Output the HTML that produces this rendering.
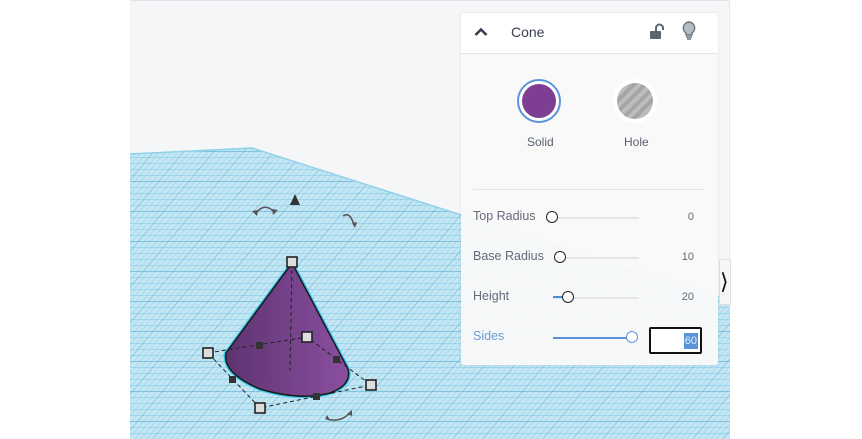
<!DOCTYPE html>
<html><head><style>
body{margin:0;width:862px;height:438px;background:#fff;position:relative;overflow:hidden;font-family:"Liberation Sans",sans-serif}
#cv{position:absolute;left:130px;top:0;width:600px;height:438px;background:#f5f6f8;border-top:1px solid #e2e4e8;box-sizing:border-box;border-right:1px solid #e8e9ec}
#panel{position:absolute;left:461px;top:13px;width:257px;height:352px;background:rgba(249,249,249,0.96);border-radius:3px;box-shadow:0 0 2px rgba(0,0,0,.12)}
#hdr{height:40px;background:#fff;border-bottom:1px solid #e3e3e3;position:relative;border-radius:3px 3px 0 0}
.t{position:absolute;font-size:13px;color:#5a6170}
.lbl{position:absolute;left:12px;font-size:12.5px;color:#636a78}
.num{position:absolute;right:24px;font-size:11px;color:#636a78}
.track{position:absolute;left:92px;width:86px;height:2px;background:#e6e6e6}
.knob{position:absolute;width:10px;height:10px;border:1.5px solid #222;border-radius:50%;background:#fff}
</style></head><body>
<div id="cv">
<svg width="600" height="438" style="position:absolute;left:0;top:0">
<defs>
<pattern id="g" width="6" height="6" patternUnits="userSpaceOnUse" patternTransform="skewX(-40)">
<rect width="6" height="6" fill="#c4e6f3"/>
<path d="M0 0H6M0 0V6" stroke="#7cc6e4" stroke-width="0.9"/>
</pattern>
<pattern id="G" width="30" height="30" patternUnits="userSpaceOnUse" patternTransform="skewX(-40)">
<path d="M0 0H30M0 0V30" stroke="#52a9cf" stroke-width="0.9" fill="none"/>
</pattern>
<linearGradient id="cg" x1="0" x2="1" y1="0" y2="0"><stop offset="0" stop-color="#5e3370"/><stop offset="1" stop-color="#8a4fa0"/></linearGradient>
</defs>
<polygon points="0,153 122,147 600,300 600,438 0,438" fill="url(#g)"/>
<polygon points="0,153 122,147 600,300 600,438 0,438" fill="url(#G)"/>
<path d="M0,153 L122,147 L600,300" stroke="#8fd0ea" stroke-width="1.5" fill="none"/>
<path d="M162,262 L96,352 Q92,372 130,388 Q170,400 200,392 Q222,384 218,368 Z" fill="url(#cg)" stroke="#35c7ea" stroke-width="4" stroke-linejoin="round"/>
<path d="M162,262 L96,352 Q92,372 130,388 Q170,400 200,392 Q222,384 218,368 Z" fill="url(#cg)" stroke="#1a1a1a" stroke-width="1.5"/>
<g stroke="#222" stroke-width="1" stroke-dasharray="4,3" fill="none">
<path d="M78,352 L177,336 L241,384 L130,407 Z"/>
<path d="M162,262 L160,370"/>
</g>
<g fill="#ddd" stroke="#222" stroke-width="1.6">
<rect x="157" y="256" width="10" height="10"/><rect x="73" y="347" width="10" height="10"/>
<rect x="172" y="331" width="10" height="10"/><rect x="236" y="379" width="10" height="10"/>
<rect x="125" y="402" width="10" height="10"/>
</g>
<g fill="#333"><rect x="126" y="341" width="7" height="7"/><rect x="203" y="355" width="7" height="7"/>
<rect x="99" y="375" width="7" height="7"/><rect x="183" y="392" width="7" height="7"/></g>
<path d="M165,193 L160,204 L170,204 Z" fill="#333"/>
<g stroke="#555" stroke-width="1.5" fill="none">
<path d="M125,213 Q135,200 145,212"/><path d="M213,215 Q220,210 224,224"/><path d="M197,418 Q210,422 220,412"/>
</g>
<g fill="#555"><path d="M122,210 l5,5 l1,-6z"/><path d="M148,209 l-5,5 l-1,-6z"/><path d="M222,222 l3,5 l2,-6z"/><path d="M197,414 l-2,4 l5,1z"/><path d="M222,409 l0,6 l-5,-2z"/></g>
</svg>
<div style="position:absolute;left:589px;top:258px;width:12px;height:46px;background:#f6f6f6;border:1px solid #e0e0e0;box-sizing:border-box;font-size:22px;line-height:44px;color:#111">&#10217;</div>
</div>
<div id="panel">
<div id="hdr">
<svg style="position:absolute;left:13px;top:14px" width="14" height="10"><path d="M1.5,8 L7,2.5 L12.5,8" stroke="#2f3a4a" stroke-width="2.4" fill="none"/></svg>
<div class="t" style="left:50px;top:11px;font-size:14px;color:#3b4250">Cone</div>
<svg style="position:absolute;left:188px;top:10px" width="16" height="18"><path d="M7,8 V5 A3.5,3.5 0 0 1 14,5 V7" stroke="#5a6472" stroke-width="2" fill="none"/><rect x="1" y="8" width="11" height="8" rx="1" fill="#5a6472"/></svg>
<svg style="position:absolute;left:220px;top:7px" width="16" height="22"><path d="M8,2 A6,6 0 0 1 11,13 V15 H5 V13 A6,6 0 0 1 8,2 Z" fill="#b5bcc6" stroke="#6a7380" stroke-width="1.4"/><path d="M5,17 H11 M6,19 H10" stroke="#6a7380" stroke-width="1.4"/></svg>
</div>
<div style="position:absolute;left:56px;top:66px;width:44px;height:44px;border:2px solid #5b93da;border-radius:50%;box-sizing:border-box;background:#fff"><div style="position:absolute;left:3px;top:3px;width:34px;height:34px;border-radius:50%;background:#7e3f93"></div></div>
<div style="position:absolute;left:152px;top:66px;width:44px;height:44px;border-radius:50%;background:#fff"><div style="position:absolute;left:4px;top:4px;width:36px;height:36px;border-radius:50%;background:repeating-linear-gradient(-45deg,#bdbdbd 0 4px,#a5a5a5 4px 8px)"></div></div>
<div class="t" style="left:66px;top:122px;font-size:12px">Solid</div>
<div class="t" style="left:163px;top:122px;font-size:12px">Hole</div>
<div style="position:absolute;left:12px;right:14px;top:176px;height:1px;background:#e6e6e6"></div>
<div class="lbl" style="top:196px">Top Radius</div><div class="track" style="top:204px"></div><div class="knob" style="left:85px;top:198px"></div><div class="num" style="top:198px">0</div>
<div class="lbl" style="top:236px">Base Radius</div><div class="track" style="top:244px"></div><div class="knob" style="left:93px;top:238px"></div><div class="num" style="top:238px">10</div>
<div class="lbl" style="top:276px">Height</div><div class="track" style="top:284px"></div><div style="position:absolute;left:92px;top:283px;width:10px;height:2px;background:#4a8fd8"></div><div class="knob" style="left:101px;top:278px"></div><div class="num" style="top:278px">20</div>
<div class="lbl" style="top:316px;color:#6a9ad8">Sides</div><div style="position:absolute;left:92px;top:324px;width:75px;height:2px;background:#5b93da"></div><div class="knob" style="left:165px;top:318px;border-color:#5b93da"></div>
<div style="position:absolute;left:188px;top:314px;width:53px;height:27px;border:2px solid #111;border-radius:2px;box-sizing:border-box;background:#fff"><span style="position:absolute;right:2px;top:4px;background:#5b93da;color:#e8eefa;font-size:11px;padding:2px 1px">60</span></div>
</div>
</body></html>
